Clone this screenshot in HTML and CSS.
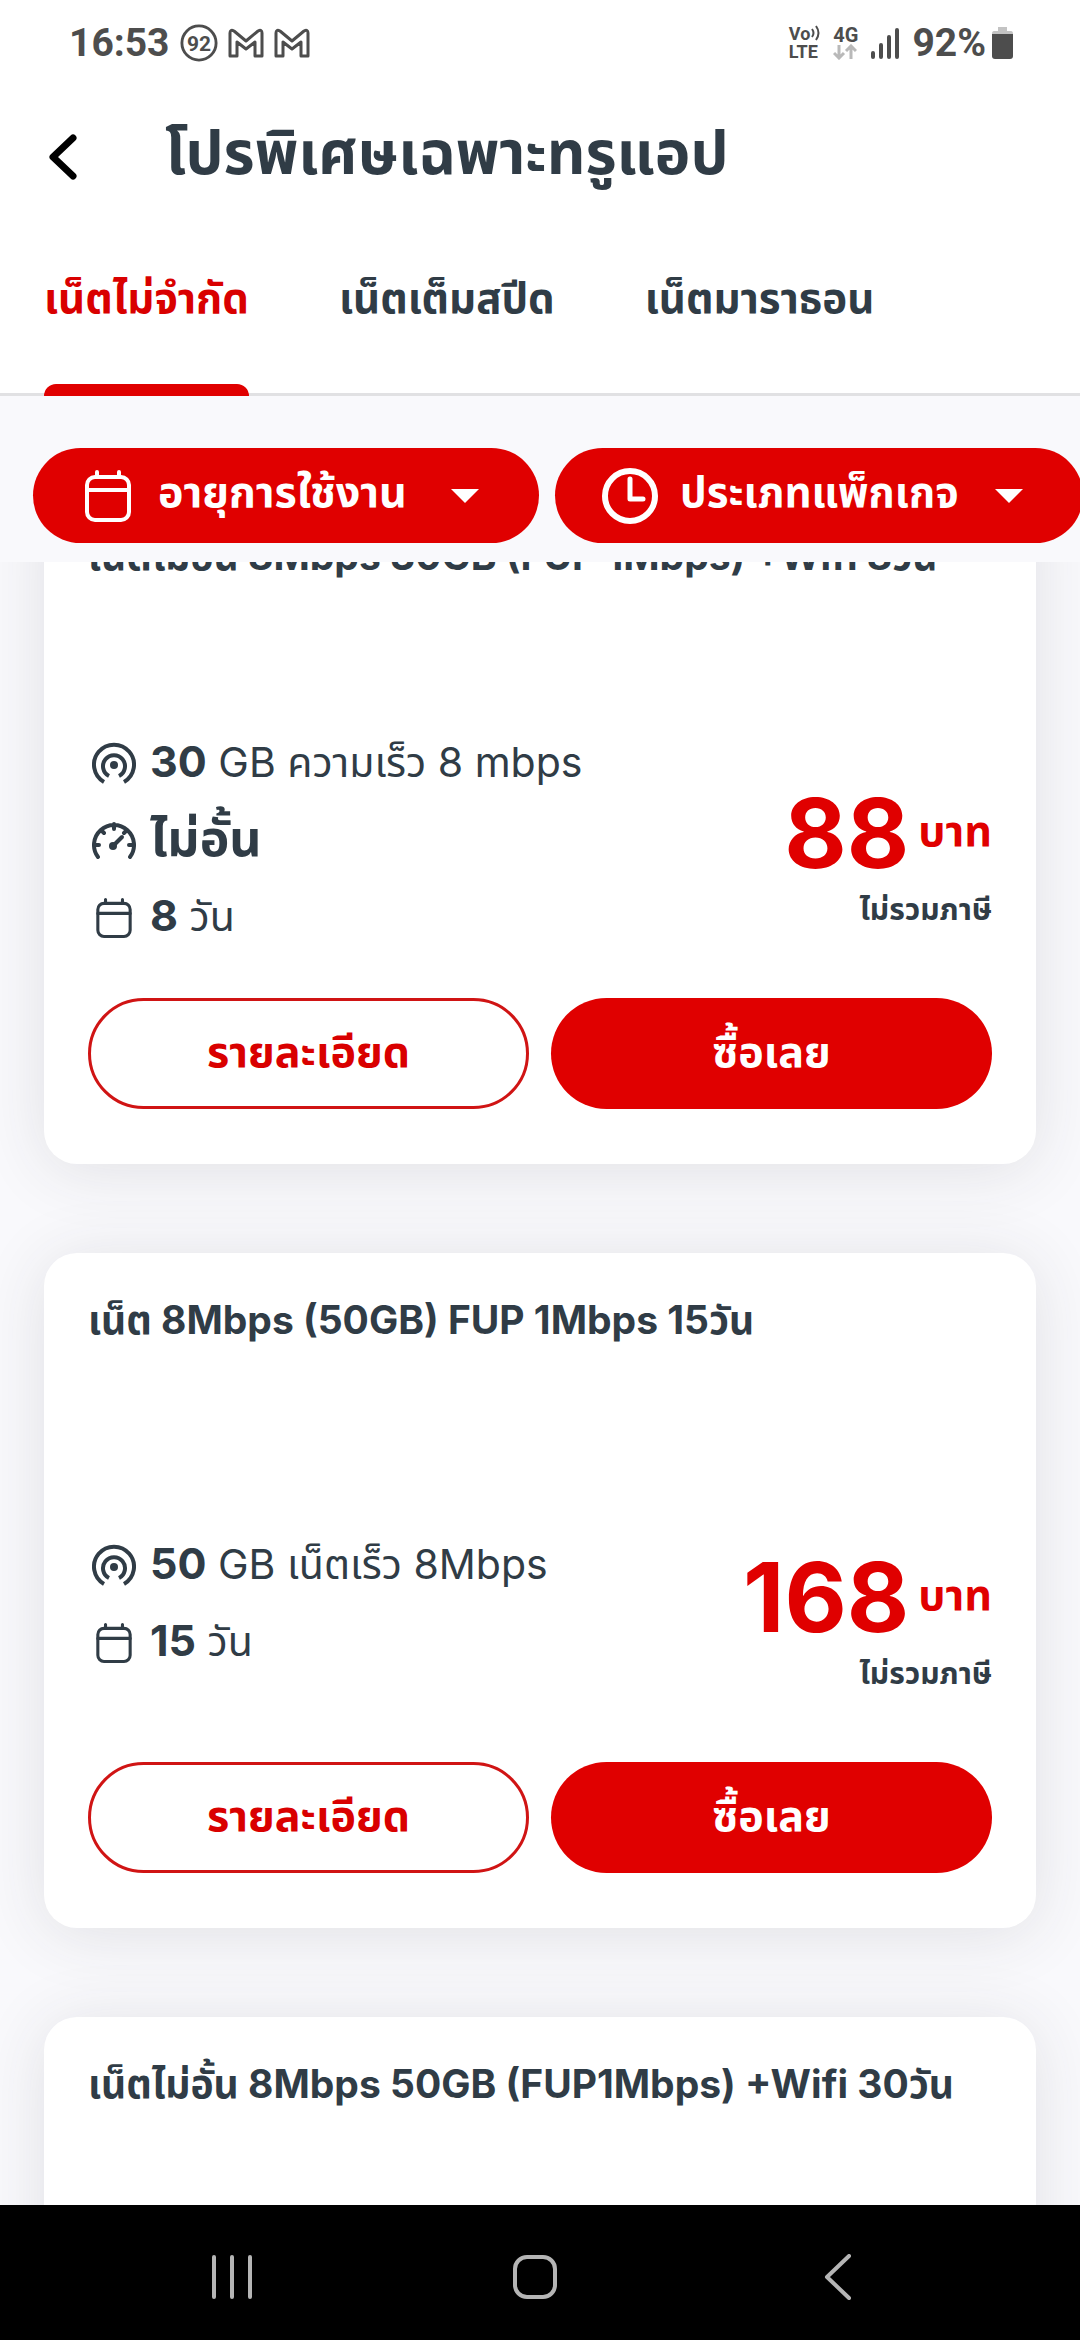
FILE: index.html
```html
<!DOCTYPE html>
<html lang="th">
<head>
<meta charset="utf-8">
<meta name="viewport" content="width=device-width, initial-scale=1">
<title>โปรพิเศษเฉพาะทรูแอป</title>
<link rel="stylesheet" href="styles.css">
</head>
<body>
<svg class="sprite" aria-hidden="true">
  <symbol id="i-calendar" viewBox="0 0 46 52">
    <rect x="2" y="7" width="42" height="43" rx="8" fill="none" stroke="currentColor" stroke-width="4"/>
    <path d="M2 20H44M12 7V2M34 7V2" fill="none" stroke="currentColor" stroke-width="4" stroke-linecap="round"/>
  </symbol>
  <symbol id="i-clock" viewBox="0 0 56 58">
    <circle cx="28" cy="29" r="25" fill="none" stroke="currentColor" stroke-width="6"/>
    <path d="M28 12V32H41" fill="none" stroke="currentColor" stroke-width="5" stroke-linecap="round" stroke-linejoin="round"/>
  </symbol>
  <symbol id="i-caret" viewBox="0 0 28 14">
    <path d="M0 0H28L14 14Z" fill="currentColor"/>
  </symbol>
  <symbol id="i-signal" viewBox="0 0 44 44">
    <circle cx="22" cy="23" r="4" fill="currentColor"/>
    <path d="M17 34A11 11 0 1 1 27 34M12 40A20 20 0 1 1 32 40" fill="none" stroke="currentColor" stroke-width="4"/>
  </symbol>
  <symbol id="i-speed" viewBox="0 0 44 40">
    <path d="M6 36A20 20 0 1 1 38 36M22 3V8M10 10L12 12M34 10L32 12M3 24H7M37 24H41" fill="none" stroke="currentColor" stroke-width="4" stroke-linecap="round"/>
    <path d="M22 24L30 16" stroke="currentColor" stroke-width="4" stroke-linecap="round"/>
    <circle cx="21" cy="25" r="4" fill="currentColor"/>
  </symbol>
  <symbol id="i-mail" viewBox="0 0 36 30">
    <path d="M2 28V5Q2 1 6 3L18 13L30 3Q34 1 34 5V28H27V14L18 21L9 14V28Z" fill="none" stroke="currentColor" stroke-width="3" stroke-linejoin="round"/>
  </symbol>
</svg>

<div class="screen">
  <div class="status">
    <div class="status-group">
      <span class="status-text">16:53</span>
      <svg class="badge" viewBox="0 0 40 40"><circle cx="20" cy="20" r="18" fill="none" stroke="currentColor" stroke-width="3"/><text x="20" y="28" text-anchor="middle" class="badge-text">92</text></svg>
      <svg class="mail"><use href="#i-mail"/></svg>
      <svg class="mail"><use href="#i-mail"/></svg>
    </div>
    <div class="status-group status-right">
      <div class="volte"><span class="vo">Vo<svg viewBox="0 0 10 16"><path d="M2 4Q5 8 2 12M6 1Q11 8 6 15" fill="none" stroke="currentColor" stroke-width="2"/></svg></span><span>LTE</span></div>
      <div class="net"><span>4G</span><svg viewBox="0 0 24 16"><path d="M6 1V14M1 9L6 14L11 9M18 15V2M13 7L18 2L23 7" fill="none" stroke="currentColor" stroke-width="3"/></svg></div>
      <svg class="bars" viewBox="0 0 28 32"><path d="M2 26V30M10 18V30M18 10V30M26 3V30" stroke="currentColor" stroke-width="4" stroke-linecap="round"/></svg>
      <span class="status-text">92%</span>
      <svg class="battery" viewBox="0 0 21 32"><path d="M6 0H15V4H19Q21 4 21 7H0Q0 4 2 4H6Z" fill="#c3c3c3"/><path d="M0 7H21V29Q21 32 18 32H3Q0 32 0 29Z" fill="currentColor"/></svg>
    </div>
  </div>

  <header class="header">
    <button class="back" type="button" aria-label="กลับ"><svg viewBox="0 0 28 46"><path d="M24 4L4 23L24 42" fill="none" stroke="currentColor" stroke-width="7" stroke-linecap="round" stroke-linejoin="round"/></svg></button>
    <h1 class="title">โปรพิเศษเฉพาะทรูแอป</h1>
  </header>

  <div class="tabs" role="tablist">
    <button class="tab tab-active" type="button" role="tab" aria-selected="true">เน็ตไม่จำกัด</button>
    <button class="tab" type="button" role="tab" aria-selected="false">เน็ตเต็มสปีด</button>
    <button class="tab" type="button" role="tab" aria-selected="false">เน็ตมาราธอน</button>
  </div>

  <div class="filters">
    <button class="pill" type="button"><svg class="pill-cal"><use href="#i-calendar"/></svg><span>อายุการใช้งาน</span><svg class="caret"><use href="#i-caret"/></svg></button>
    <button class="pill pill-wide" type="button"><svg class="pill-clock"><use href="#i-clock"/></svg><span>ประเภทแพ็กเกจ</span><svg class="caret"><use href="#i-caret"/></svg></button>
  </div>

  <main class="scroller">
    <div class="list">
      <article class="card">
        <h2 class="card-title">เน็ตไม่อั้น 8Mbps 30GB (FUP 1Mbps) +Wifi 8วัน</h2>
        <div class="info">
          <ul class="specs">
            <li><svg class="icon"><use href="#i-signal"/></svg><span><b>30</b> GB ความเร็ว 8 mbps</span></li>
            <li><svg class="icon"><use href="#i-speed"/></svg><b class="unlimited">ไม่อั้น</b></li>
            <li><svg class="icon icon-cal"><use href="#i-calendar"/></svg><span><b>8</b> วัน</span></li>
          </ul>
          <div class="price">
            <div class="amount"><strong>88</strong><span>บาท</span></div>
            <small class="tax">ไม่รวมภาษี</small>
          </div>
        </div>
        <div class="actions">
          <button class="btn btn-outline" type="button">รายละเอียด</button>
          <button class="btn btn-solid" type="button">ซื้อเลย</button>
        </div>
      </article>

      <article class="card">
        <h2 class="card-title">เน็ต 8Mbps (50GB) FUP 1Mbps 15วัน</h2>
        <div class="info">
          <ul class="specs">
            <li><svg class="icon"><use href="#i-signal"/></svg><span><b>50</b> GB เน็ตเร็ว 8Mbps</span></li>
            <li><svg class="icon icon-cal"><use href="#i-calendar"/></svg><span><b>15</b> วัน</span></li>
          </ul>
          <div class="price">
            <div class="amount"><strong>168</strong><span>บาท</span></div>
            <small class="tax">ไม่รวมภาษี</small>
          </div>
        </div>
        <div class="actions">
          <button class="btn btn-outline" type="button">รายละเอียด</button>
          <button class="btn btn-solid" type="button">ซื้อเลย</button>
        </div>
      </article>

      <article class="card">
        <h2 class="card-title">เน็ตไม่อั้น 8Mbps 50GB (FUP1Mbps) +Wifi 30วัน</h2>
        <div class="info"></div>
      </article>
    </div>
  </main>

  <nav class="navbar">
    <button type="button" aria-label="ล่าสุด"><svg viewBox="0 0 46 46"><path d="M5 3V43M23 3V43M41 3V43" stroke="currentColor" stroke-width="4" stroke-linecap="round"/></svg></button>
    <button type="button" aria-label="หน้าแรก"><svg viewBox="0 0 46 46"><rect x="3" y="3" width="40" height="40" rx="12" fill="none" stroke="currentColor" stroke-width="4"/></svg></button>
    <button type="button" aria-label="ย้อนกลับ"><svg viewBox="0 0 46 46"><path d="M34 2L12 23L34 44" fill="none" stroke="currentColor" stroke-width="4" stroke-linecap="round" stroke-linejoin="round"/></svg></button>
  </nav>
</div>
</body>
</html>
```
FILE: styles.css
```css
* {
  box-sizing: border-box;
}

body {
  margin: 0;
  color: #303c46;
  font-family: Inter, "Noto Sans Thai", "Noto Sans", sans-serif;
}

button {
  padding: 0;
  border: 0;
  background: none;
  color: inherit;
  font: inherit;
  white-space: nowrap;
}

svg {
  display: block;
  flex: none;
}

.sprite {
  position: absolute;
  width: 0;
  height: 0;
}

.screen {
  display: flex;
  flex-direction: column;
  height: 100vh;
  overflow: hidden;
  background: #fff;
}

/* Status bar */
.status {
  display: flex;
  justify-content: space-between;
  align-items: center;
  height: 86px;
  flex: none;
  padding: 0 67px 0 69px;
  color: #4d4d4d;
  font-family: Roboto, sans-serif;
  font-weight: 700;
}

.status-group {
  display: flex;
  align-items: center;
  gap: 10px;
}

.status-right {
  gap: 13px;
}

.status-text {
  font-size: 39px;
  font-weight: 700;
  line-height: 48px;
}

.badge {
  width: 38px;
  height: 38px;
}

.badge-text {
  fill: currentColor;
  font-size: 22px;
}

.mail {
  width: 36px;
  height: 30px;
}

.volte,
.net {
  display: grid;
  font-size: 18px;
  line-height: 18px;
}

.vo {
  display: flex;
}

.vo svg {
  width: 10px;
  height: 16px;
}

.net {
  font-size: 20px;
}

.net svg {
  width: 24px;
  height: 16px;
  color: #b9b9b9;
}

.bars {
  width: 28px;
  height: 32px;
}

.battery {
  width: 21px;
  height: 32px;
  margin-left: -7px;
}

/* Header and tabs */
.header {
  display: flex;
  align-items: center;
  gap: 88px;
  height: 138px;
  flex: none;
  padding: 4px 49px 0;
}

.back svg {
  width: 28px;
  height: 46px;
  color: #000;
}

.title {
  margin: 0;
  padding-bottom: 10px;
  font-size: 60px;
  font-weight: 700;
  line-height: 80px;
}

.tabs {
  display: flex;
  gap: 90px;
  height: 172px;
  flex: none;
  padding: 0 44px;
  border-bottom: 3px solid #e1e1e3;
}

.tab {
  margin-bottom: -3px;
  padding-bottom: 20px;
  font-size: 42px;
  font-weight: 700;
}

.tab-active {
  position: relative;
  color: #d90000;
}

.tab-active::after {
  content: "";
  position: absolute;
  right: 0;
  bottom: 0;
  left: 0;
  height: 12px;
  border-radius: 12px 12px 0 0;
  background: #e00000;
}

/* Filters */
.filters {
  display: flex;
  gap: 16px;
  flex: none;
  padding: 52px 33px 19px;
  background: #f9f9fc;
  overflow: hidden;
}

.pill {
  display: flex;
  align-items: center;
  gap: 27px;
  height: 95px;
  flex: 0 0 506px;
  padding: 0 60px 0 52px;
  border-radius: 48px;
  background: #e00000;
  color: #fff;
  font-size: 43px;
  font-weight: 700;
}

.pill span {
  padding-bottom: 4px;
}

.pill-wide {
  flex-basis: 528px;
  gap: 22px;
  padding-left: 47px;
  font-size: 42px;
}

.pill-cal {
  width: 46px;
  height: 52px;
}

.pill-clock {
  width: 56px;
  height: 58px;
}

.caret {
  width: 28px;
  height: 14px;
  margin-left: auto;
}

/* Package list, scrolled part of the way into the first card */
.scroller {
  flex: 1;
  min-height: 0;
  overflow: hidden;
  background: #f9f9fc;
}

.list {
  display: grid;
  gap: 89px;
  margin-top: -73px;
  padding: 0 44px;
}

.card {
  padding: 42px 44px 55px;
  border-radius: 33px;
  background: #fff;
  box-shadow: 0 6px 66px rgba(48, 50, 60, 0.12);
}

.card-title {
  margin: 0;
  font-size: 39px;
  font-weight: 700;
  line-height: 50px;
}

.info {
  display: flex;
  justify-content: space-between;
  align-items: center;
  height: 330px;
  margin-top: 87px;
  padding-top: 15px;
}

.specs {
  display: grid;
  margin: 0;
  padding: 0;
  list-style: none;
  font-size: 41px;
}

.specs li {
  display: flex;
  align-items: center;
  gap: 14px;
  height: 77px;
}

.specs b {
  font-size: 43px;
}

.specs .unlimited {
  font-size: 50px;
}

.icon {
  width: 44px;
  height: 44px;
  margin-left: 4px;
}

.icon-cal {
  height: 40px;
}

.price {
  padding-top: 36px;
  text-align: right;
}

.amount {
  display: flex;
  align-items: center;
  justify-content: flex-end;
  gap: 9px;
  color: #e00000;
}

.amount strong {
  font-size: 96px;
  line-height: 100px;
}

.amount span {
  font-size: 43px;
  font-weight: 700;
}

.tax {
  font-size: 30px;
  font-weight: 700;
  line-height: 52px;
}

.actions {
  display: grid;
  grid-template-columns: 1fr 1fr;
  gap: 22px;
}

.btn {
  height: 111px;
  border-radius: 56px;
  font-size: 43px;
  font-weight: 700;
}

.btn-outline {
  border: 3px solid #d01414;
  color: #d90000;
}

.btn-solid {
  background: #e00000;
  color: #fff;
}

/* System navigation */
.navbar {
  display: grid;
  grid-template-columns: repeat(3, 1fr);
  align-items: center;
  justify-items: center;
  height: 135px;
  flex: none;
  padding: 8px 91px 0 81px;
  background: #000;
  color: #b5b5b5;
}

.navbar svg {
  width: 46px;
  height: 46px;
}
```
